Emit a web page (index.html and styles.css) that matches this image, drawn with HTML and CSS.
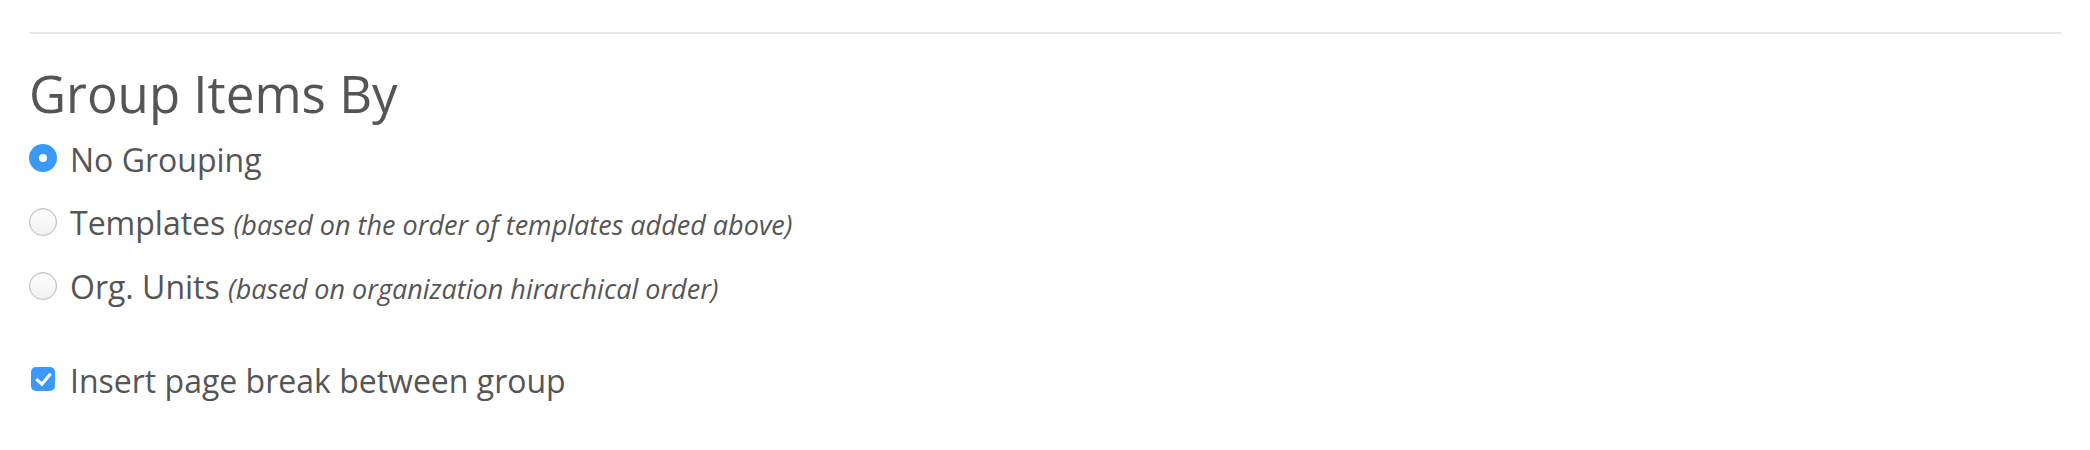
FILE: index.html
```html
<!DOCTYPE html>
<html>
<head>
<meta charset="utf-8">
<link rel="stylesheet" href="styles.css">
</head>
<body>
<div class="page">
  <hr class="divider">
  <h2 class="title">Group Items By</h2>
  <div class="options">
    <label class="option">
      <input type="radio" name="group" class="radio" checked>
      <span class="label">No Grouping</span>
    </label>
    <label class="option">
      <input type="radio" name="group" class="radio">
      <span class="label">Templates <em class="hint">(based on the order of templates added above)</em></span>
    </label>
    <label class="option">
      <input type="radio" name="group" class="radio">
      <span class="label">Org. Units <em class="hint">(based on organization hirarchical order)</em></span>
    </label>
  </div>
  <label class="option check-row">
    <input type="checkbox" class="checkbox" checked>
    <span class="label">Insert page break between group</span>
  </label>
</div>
</body>
</html>
```

FILE: styles.css
```css
html, body {
  margin: 0;
  padding: 0;
  background: #fff;
}

.page {
  padding: 32px 29px 0 29px;
  font-family: "Open Sans", "Noto Sans", sans-serif;
  color: #555;
}

.divider {
  margin: 0;
  border: 0;
  height: 2px;
  background: #e6e6e6;
}

.title {
  margin: 32px 0 0 0;
  font-size: 51px;
  line-height: 55px;
  font-weight: 400;
  color: #555;
}

.options {
  margin-top: 19px;
  display: flex;
  flex-direction: column;
  gap: 24px;
}

.option {
  display: flex;
  align-items: center;
  height: 40px;
  font-size: 32px;
  line-height: 40px;
}

.label {
  margin-left: 13px;
  white-space: nowrap;
}

.hint {
  font-size: 27px;
  font-style: italic;
}

.radio {
  appearance: none;
  -webkit-appearance: none;
  margin: -4px 0 0 0;
  width: 28px;
  height: 28px;
  border-radius: 50%;
  box-sizing: border-box;
  border: 1px solid #b8b8b8;
  background: linear-gradient(#ffffff, #f1f1f1);
  box-shadow: inset 0 1px 1px rgba(0,0,0,0.08);
  flex: none;
  position: relative;
}

.radio:checked {
  border: none;
  background: #3b99fc;
  box-shadow: none;
}

.radio:checked::after {
  content: "";
  position: absolute;
  left: 10px;
  top: 10px;
  width: 8px;
  height: 8px;
  border-radius: 50%;
  background: #fff;
}

.check-row {
  margin-top: 53px;
}

.checkbox {
  appearance: none;
  -webkit-appearance: none;
  margin: -4px 2px 0 2px;
  width: 24px;
  height: 24px;
  border-radius: 5px;
  background: #3b99fc;
  flex: none;
  position: relative;
}

.checkbox::after {
  content: "";
  position: absolute;
  left: 8px;
  top: 3px;
  width: 6px;
  height: 12px;
  border-right: 3px solid #fff;
  border-bottom: 3px solid #fff;
  transform: rotate(40deg);
}

.check-row .label {
  margin-left: 13px;
}
```
